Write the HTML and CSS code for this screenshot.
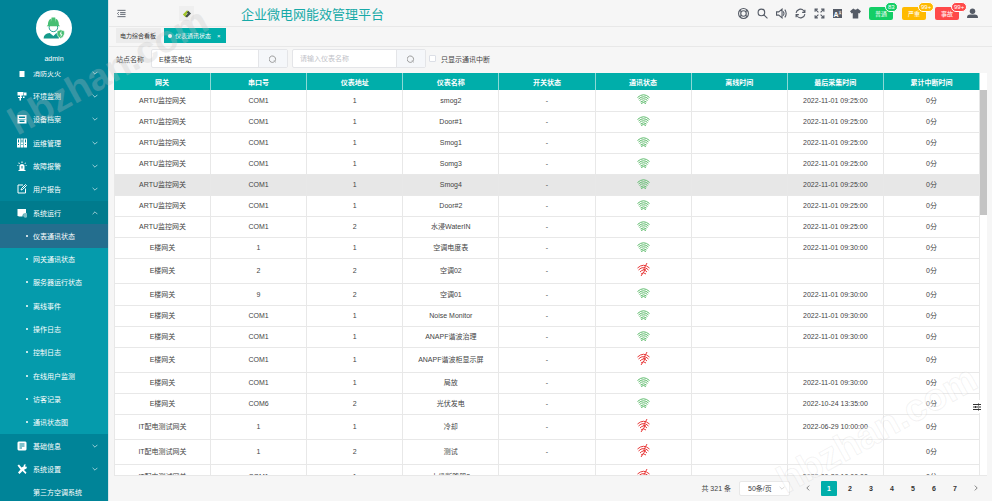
FILE: index.html
```html
<!DOCTYPE html>
<html lang="zh-CN">

<head>
    <meta charset="UTF-8">
    <title>企业微电网能效管理平台</title>
    <link rel="stylesheet" href="styles.css">
</head>

<body>

    <!-- Shared icons -->
    <svg class="sprite" aria-hidden="true">
        <symbol id="wifi" viewBox="0 0 26 20">
            <path d="M1 7Q13-4 25 7M3 10Q13 1 23 10M5 13Q13 6 21 13M7 16Q13 11 19 16M8 19Q13 15 18 19" />
        </symbol>
        <symbol id="wifi-off" viewBox="0 0 26 26">
            <path d="M1 10Q13-1 25 10M3 14Q13 4 23 14M6 18Q13 10 20 18M8 22Q13 17 18 22" />
            <path d="M20 0L13 13h4L8 26" />
        </symbol>
        <symbol id="down" viewBox="0 0 10 10">
            <path d="M1 3l4 4 4-4" />
        </symbol>
        <symbol id="up" viewBox="0 0 10 10">
            <path d="M1 7l4-4 4 4" />
        </symbol>
        <symbol id="search" viewBox="0 0 20 20">
            <path d="M13 17a8 8 0 1 1 2-2M12 14l5 4" />
        </symbol>
    </svg>

    <!-- Sidebar -->
    <aside class="sidebar">
        <div class="profile">
            <div class="avatar">
                <svg viewBox="0 0 36 36">
                    <circle cx="17" cy="17" r="7" fill="#fff" stroke="#159a8a" stroke-width="1.500" />
                    <path fill="#46bf73" d="M8 13q0-8 5-10v6l1-8h6l1 8V3q5 2 5 10l2 2H6z" />
                    <path fill="#159a8a" d="M1 35q0-8 10-9l6 5 5-5 4 1v8z" />
                    <path fill="#46bf73" stroke="#fff" d="M29 21l6 2v5q-1 5-6 7-5-2-6-7v-5z" />
                    <path fill="none" stroke="#fff" stroke-width="1.500" d="M30 24l-2 4h3l-2 4" />
                </svg>
            </div>
            <span>admin</span>
        </div>
        <nav class="menu-wrap">
            <ul class="menu">
                <li><a href="#"><svg class="icon" viewBox="0 0 20 20"><path d="M5 5h10v13H5zM7 1h6v3H7z" /></svg>消防灭火<svg class="arrow"><use href="#down" /></svg></a></li>
                <li><a href="#"><svg class="icon" viewBox="0 0 20 20"><path d="M1 2h12v7H1zM14 3h5v6h-5zM6 9h3v4H6zM2 12h8v2H2zM5 14h3v5H5zM12 11h3v3h-3z" /></svg>环境监测<svg class="arrow"><use href="#down" /></svg></a></li>
                <li><a href="#"><svg class="icon" viewBox="0 0 20 20"><path fill-rule="evenodd" d="M1 2h18v17H1zM4 5v3h12V5zM3 10v1h14v-1zM5 13v3h10v-3z" /></svg>设备档案<svg class="arrow"><use href="#down" /></svg></a></li>
                <li><a href="#"><svg class="icon" viewBox="0 0 20 20"><path fill-rule="evenodd" d="M0 1h6v18H0zM7 1h6v18H7zM14 1h6v18h-6zM2 3v6h2V3zM9 3v6h2V3zM16 3v6h2V3zM2 12v2h2v-2zM9 12v2h2v-2zM16 12v2h2v-2z" /></svg>运维管理<svg class="arrow"><use href="#down" /></svg></a></li>
                <li><a href="#"><svg class="icon" viewBox="0 0 20 20"><path fill-rule="evenodd" d="M5 18V9q1-3 5-3t5 3v9h2v2H3v-2zM9 10v5h2v-5zM9 1h2v3H9zM2 4l2-1 2 2-1 1zM15 5l2-2 1 1-2 2zM0 9h3v1H0zM17 9h3v1h-3z" /></svg>故障报警<svg class="arrow"><use href="#down" /></svg></a></li>
                <li><a href="#"><svg class="icon line" viewBox="0 0 20 20"><path d="M12 2H2v16h15V9M8 12l1-3 8-8 2 2-8 8z" /></svg>用户报告<svg class="arrow"><use href="#down" /></svg></a></li>
                <li class="open">
                    <a href="#"><svg class="icon" viewBox="0 0 20 20"><path d="M1 2h17v8a6 6 0 0 0-7 6H1zM3 17h8v1H3z" /><path opacity=".5" d="M15 10a5 5 0 1 1 0 9 5 5 0 0 1 0-9z" /></svg>系统运行<svg class="arrow"><use href="#up" /></svg></a>
                    <ul class="submenu">
                        <li class="active"><a href="#">仪表通讯状态</a></li>
                        <li><a href="#">网关通讯状态</a></li>
                        <li><a href="#">服务器运行状态</a></li>
                        <li><a href="#">离线事件</a></li>
                        <li><a href="#">操作日志</a></li>
                        <li><a href="#">控制日志</a></li>
                        <li><a href="#">在线用户监测</a></li>
                        <li><a href="#">访客记录</a></li>
                        <li><a href="#">通讯状态图</a></li>
                    </ul>
                </li>
                <li><a href="#"><svg class="icon" viewBox="0 0 20 20"><path fill-rule="evenodd" d="M3 1h14l2 2v14l-2 2H3l-2-2V3zM5 5v2h10V5zM5 9v2h10V9zM5 13v2h5v-2z" /></svg>基础信息<svg class="arrow"><use href="#down" /></svg></a></li>
                <li><a href="#"><svg class="icon" viewBox="0 0 20 20"><path d="M1 3l3-2 5 6 4-2 1-4 4 0-2 3 2 2 2-1-1 4-4 2-1 1 5 5-2 3-6-6-6 6-3-3 5-6z" /></svg>系统设置<svg class="arrow"><use href="#down" /></svg></a></li>
                <li><a href="#"><span class="icon"></span>第三方空调系统</a></li>
            </ul>
        </nav>
    </aside>

    <div class="main">
        <!-- Top bar -->
        <header class="topbar">
            <button class="icon-btn fold" aria-label="折叠菜单"><svg class="line" viewBox="0 0 20 20"><path d="M1 3h18M7 8h12M7 12h12M1 17h18M4 7l-3 3 3 3" /></svg></button>
            <div class="logo">
                <svg viewBox="0 0 20 20"><path fill="#a3c52d" d="M0 11L10 1l5 3-7 7 3 3-4 4z" /><path fill="#45504c" d="M20 9L10 19l-5-3 7-7-3-3 4-4z" /><path fill="#a3c52d" d="M0 11L10 1l2 2-8 8 4 4-2 2z" /></svg>
            </div>
            <h1>企业微电网能效管理平台</h1>
            <div class="tools">
                <button class="icon-btn" aria-label="帮助"><svg class="line" viewBox="0 0 20 20"><circle cx="10" cy="10" r="9" /><circle cx="10" cy="10" r="5" /><path d="M4 4l2 3M16 4l-2 3M4 16l2-3M16 16l-2-3" /></svg></button>
                <button class="icon-btn" aria-label="搜索"><svg class="line" viewBox="0 0 20 20"><circle cx="8" cy="8" r="6" /><path d="M12 12l7 7" /></svg></button>
                <button class="icon-btn" aria-label="声音"><svg class="line" viewBox="0 0 20 20"><path d="M1 7h4l6-5v16l-6-5H1zM13 6q3 4 0 8M16 3q5 7 0 14" /></svg></button>
                <button class="icon-btn" aria-label="刷新"><svg class="line" viewBox="0 0 20 20"><path d="M2 9a8 8 0 0 1 14-4l2 3M18 3v5h-5M18 11a8 8 0 0 1-14 4l-2-3M2 17v-5h5" /></svg></button>
                <button class="icon-btn" aria-label="全屏"><svg class="line" viewBox="0 0 20 20"><path d="M8 8L3 3M2 7V2h5M12 8l5-5M13 2h5v5M8 12l-5 5M2 13v5h5M12 12l5 5M18 13v5h-5" /></svg></button>
                <button class="icon-btn lang" aria-label="语言"><span>A<sup>文</sup></span></button>
                <button class="icon-btn" aria-label="主题"><svg viewBox="0 0 20 20"><path d="M6 1q4 4 8 0l6 5-3 4-2-1v10H5V9l-2 1-3-4z" /></svg></button>
                <button class="alarm normal">普通<i>83</i></button>
                <button class="alarm serious">严重<i>99+</i></button>
                <button class="alarm accident">事故<i>99+</i></button>
                <button class="icon-btn" aria-label="用户"><svg viewBox="0 0 20 20"><circle cx="10" cy="6" r="5" /><path d="M0 18q0-6 6-6h8q6 0 6 6z" /></svg></button>
            </div>
        </header>

        <!-- Tabs -->
        <div class="tabs">
            <a href="#" class="tab">电力综合看板</a>
            <a href="#" class="tab current">仪表通讯状态<span class="close">×</span></a>
        </div>

        <!-- Filters -->
        <form class="filters">
            <label for="station">站点名称</label>
            <div class="search-box">
                <input type="text" id="station" value="E楼变电站">
                <button type="button" aria-label="搜索站点"><svg><use href="#search" /></svg></button>
            </div>
            <div class="search-box">
                <input type="text" placeholder="请输入仪表名称" aria-label="仪表名称">
                <button type="button" aria-label="搜索仪表"><svg><use href="#search" /></svg></button>
            </div>
            <input type="checkbox" id="onlyBroken">
            <label for="onlyBroken">只显示通讯中断</label>
        </form>

        <!-- Table -->
        <div class="table-box">
            <div class="table-scroll">
                <table>
                    <thead>
                        <tr><th>网关</th><th>串口号</th><th>仪表地址</th><th>仪表名称</th><th>开关状态</th><th>通讯状态</th><th>离线时间</th><th>最后采集时间</th><th>累计中断时间</th></tr>
                    </thead>
                    <tbody>
                        <tr><td>ARTU监控网关</td><td>COM1</td><td>1</td><td>smog2</td><td>-</td><td><svg class="on"><use href="#wifi" /></svg></td><td></td><td>2022-11-01 09:25:00</td><td>0分</td></tr>
                        <tr><td>ARTU监控网关</td><td>COM1</td><td>1</td><td>Door#1</td><td>-</td><td><svg class="on"><use href="#wifi" /></svg></td><td></td><td>2022-11-01 09:25:00</td><td>0分</td></tr>
                        <tr><td>ARTU监控网关</td><td>COM1</td><td>1</td><td>Smog1</td><td>-</td><td><svg class="on"><use href="#wifi" /></svg></td><td></td><td>2022-11-01 09:25:00</td><td>0分</td></tr>
                        <tr><td>ARTU监控网关</td><td>COM1</td><td>1</td><td>Somg3</td><td>-</td><td><svg class="on"><use href="#wifi" /></svg></td><td></td><td>2022-11-01 09:25:00</td><td>0分</td></tr>
                        <tr class="hover"><td>ARTU监控网关</td><td>COM1</td><td>1</td><td>Smog4</td><td>-</td><td><svg class="on"><use href="#wifi" /></svg></td><td></td><td>2022-11-01 09:25:00</td><td>0分</td></tr>
                        <tr><td>ARTU监控网关</td><td>COM1</td><td>1</td><td>Door#2</td><td>-</td><td><svg class="on"><use href="#wifi" /></svg></td><td></td><td>2022-11-01 09:25:00</td><td>0分</td></tr>
                        <tr><td>ARTU监控网关</td><td>COM1</td><td>2</td><td>水浸WaterIN</td><td>-</td><td><svg class="on"><use href="#wifi" /></svg></td><td></td><td>2022-11-01 09:25:00</td><td>0分</td></tr>
                        <tr><td>E楼网关</td><td>1</td><td>1</td><td>空调电度表</td><td>-</td><td><svg class="on"><use href="#wifi" /></svg></td><td></td><td>2022-11-01 09:30:00</td><td>0分</td></tr>
                        <tr><td>E楼网关</td><td>2</td><td>2</td><td>空调02</td><td>-</td><td><svg class="off"><use href="#wifi-off" /></svg></td><td></td><td></td><td>0分</td></tr>
                        <tr><td>E楼网关</td><td>9</td><td>2</td><td>空调01</td><td>-</td><td><svg class="on"><use href="#wifi" /></svg></td><td></td><td>2022-11-01 09:30:00</td><td>0分</td></tr>
                        <tr><td>E楼网关</td><td>COM1</td><td>1</td><td>Noise Monitor</td><td>-</td><td><svg class="on"><use href="#wifi" /></svg></td><td></td><td>2022-11-01 09:30:00</td><td>0分</td></tr>
                        <tr><td>E楼网关</td><td>COM1</td><td>1</td><td>ANAPF谐波治理</td><td>-</td><td><svg class="on"><use href="#wifi" /></svg></td><td></td><td>2022-11-01 09:30:00</td><td>0分</td></tr>
                        <tr><td>E楼网关</td><td>COM1</td><td>1</td><td>ANAPF谐波柜显示屏</td><td>-</td><td><svg class="off"><use href="#wifi-off" /></svg></td><td></td><td></td><td>0分</td></tr>
                        <tr><td>E楼网关</td><td>COM1</td><td>1</td><td>局放</td><td>-</td><td><svg class="on"><use href="#wifi" /></svg></td><td></td><td>2022-11-01 09:30:00</td><td>0分</td></tr>
                        <tr><td>E楼网关</td><td>COM6</td><td>2</td><td>光伏发电</td><td>-</td><td><svg class="on"><use href="#wifi" /></svg></td><td></td><td>2022-10-24 13:35:00</td><td>0分</td></tr>
                        <tr><td>IT配电测试网关</td><td>1</td><td>1</td><td>冷却</td><td>-</td><td><svg class="off"><use href="#wifi-off" /></svg></td><td></td><td>2022-06-29 10:00:00</td><td>0分</td></tr>
                        <tr><td>IT配电测试网关</td><td>1</td><td>2</td><td>测试</td><td>-</td><td><svg class="off"><use href="#wifi-off" /></svg></td><td></td><td></td><td>0分</td></tr>
                        <tr><td>IT配电测试网关</td><td>COM1</td><td>1</td><td>上级断路器2</td><td>-</td><td><svg class="off"><use href="#wifi-off" /></svg></td><td></td><td>2022-06-29 10:00:00</td><td>0分</td></tr>
                    </tbody>
                </table>
            </div>
            <div class="scrollbar">
                <div class="thumb"></div>
            </div>
        </div>

        <!-- Pagination -->
        <footer class="pagination">
            <span>共 321 条</span>
            <div class="page-size">
                <select aria-label="每页条数">
                    <option>50条/页</option>
                    <option>100条/页</option>
                </select>
                <svg class="arrow"><use href="#down" /></svg>
            </div>
            <div class="pages">
                <button aria-label="上一页"><svg viewBox="0 0 10 10"><path d="M7 1L3 5l4 4" /></svg></button>
                <button class="current">1</button>
                <button>2</button>
                <button>3</button>
                <button>4</button>
                <button>5</button>
                <button>6</button>
                <button>7</button>
                <button aria-label="下一页"><svg viewBox="0 0 10 10"><path d="M3 1l4 4-4 4" /></svg></button>
            </div>
        </footer>
    </div>

    <button class="settings" aria-label="列设置"><svg viewBox="0 0 16 16"><path d="M0 3h16M0 8h16M0 13h16M11 1v4M5 6v4M11 11v4" /></svg></button>

    <div class="watermark wm-top">hbzhan.com</div>
    <div class="watermark wm-bottom">hbzhan.com</div>

</body>

</html>
```

FILE: styles.css
```css
/* Base Reset */
* {
    box-sizing: border-box;
    margin: 0;
    padding: 0;
}

body {
    position: relative;
    display: flex;
    height: 100vh;
    overflow: hidden;
    background-color: #f6f6f6;
    color: #444;
    font-family: "Liberation Sans", "Noto Sans CJK SC", sans-serif;
    font-size: 7px;
}

button,
input,
select {
    font: inherit;
    color: inherit;
    border: none;
    background: none;
}

button {
    cursor: pointer;
}

a {
    color: inherit;
    text-decoration: none;
}

ul {
    list-style: none;
}

svg {
    display: block;
}

.sprite {
    position: absolute;
    width: 0;
    height: 0;
}

.line {
    fill: none;
    stroke: currentColor;
    stroke-width: 2;
}

.arrow {
    width: 6px;
    height: 6px;
    fill: none;
    stroke: currentColor;
    stroke-width: 1;
}

/* Sidebar */
.sidebar {
    flex: 0 0 108px;
    display: flex;
    flex-direction: column;
    background-color: #008498;
    color: #fff;
}

.profile {
    display: flex;
    flex-direction: column;
    align-items: center;
    gap: 9px;
    padding-top: 10px;
    height: 71px;
}

.avatar {
    width: 36px;
    height: 36px;
    padding: 7px;
    border-radius: 50%;
    background-color: #fff;
}

.menu-wrap {
    flex: 1;
    overflow: hidden;
}

/* The list is scrolled down a little, so its ends are cut off */
.menu {
    display: flex;
    flex-direction: column;
    height: calc(100% + 13px);
    margin-top: -10px;
}

.menu li {
    flex: 1 0 23px;
    display: flex;
    flex-direction: column;
}

.menu a {
    flex: 1;
    display: flex;
    align-items: center;
    padding: 0 10px 0 17px;
}

.menu .icon {
    width: 10px;
    height: 10px;
    margin-right: 6px;
    fill: #fff;
}

.menu .icon.line {
    fill: none;
}

.menu .arrow {
    margin-left: auto;
}

.menu .open {
    flex: 10 0 230px;
}

.open > a {
    background-color: #007b8d;
}

.submenu {
    flex: 9;
    display: flex;
    flex-direction: column;
    background-color: #059bac;
}

.submenu a {
    padding-left: 26px;
}

.submenu a::before {
    content: "";
    width: 2px;
    height: 2px;
    margin-right: 5px;
    border-radius: 50%;
    background-color: #fff;
}

.submenu .active {
    background-color: #246e8e;
}

/* Top bar */
.main {
    flex: 1;
    display: flex;
    flex-direction: column;
    min-width: 0;
    border-left: 1px solid #d9e6e8;
}

.topbar {
    display: flex;
    align-items: center;
    height: 27px;
    padding: 0 14px 0 8px;
    border-bottom: 1px solid #e8e8e8;
}

.icon-btn {
    width: 11px;
    height: 11px;
    color: #555b66;
    fill: currentColor;
}

.icon-btn svg {
    width: 100%;
    height: 100%;
}

.icon-btn .line {
    fill: none;
}

.fold {
    width: 9px;
    height: 9px;
}

.logo {
    width: 15px;
    height: 15px;
    margin-left: 53px;
    padding: 4px;
    background-color: #efefef;
}

.logo svg {
    width: 8px;
    height: 8px;
}

.topbar h1 {
    margin-left: 47px;
    color: #18aaa8;
    font-size: 13px;
    font-weight: normal;
}

.tools {
    display: flex;
    align-items: center;
    gap: 8px;
    margin-left: auto;
}

.tools .lang {
    width: 9px;
    height: 9px;
    background-color: #555b66;
    color: #fff;
    font-size: 7px;
    font-weight: bold;
    line-height: 9px;
}

.lang sup {
    font-size: 3px;
}

.alarm {
    position: relative;
    width: 24px;
    height: 13px;
    border-radius: 2px;
    color: #fff;
    font-size: 6px;
}

.alarm + .alarm {
    margin-left: 1px;
}

.alarm i {
    position: absolute;
    top: -5px;
    left: 16px;
    padding: 0 2px;
    border: 1px solid #fff;
    border-radius: 5px;
    background-color: inherit;
    font-size: 6px;
    font-style: normal;
    line-height: 8px;
}

.normal {
    background-color: #13ce66;
}

.serious {
    background-color: #ffba00;
}

.accident {
    background-color: #ff4949;
}

/* Tabs */
.tabs {
    display: flex;
    gap: 3px;
    height: 20px;
    padding: 1px 7px 3px;
    border-bottom: 1px solid #e8e8e8;
}

.tab {
    display: flex;
    align-items: center;
    padding: 0 5px 0 4px;
    background-color: #ececec;
    font-size: 6px;
    color: #333;
}

.tab.current {
    background-color: #00aeaa;
    color: #fff;
}

.tab.current::before {
    content: "";
    width: 4px;
    height: 4px;
    margin-right: 3px;
    border-radius: 50%;
    background-color: #fff;
}

.close {
    margin-left: 6px;
}

/* Filters */
.filters {
    display: flex;
    align-items: center;
    padding: 2px 7px 4px;
}

.search-box {
    display: flex;
    width: 137px;
    height: 19px;
    margin-left: 7px;
    border: 1px solid #e4e5e8;
    border-radius: 2px;
    background-color: #fff;
}

.search-box + .search-box {
    margin-left: 4px;
    width: 134px;
}

.search-box input {
    flex: 1;
    min-width: 0;
    padding: 0 7px;
    outline: none;
}

.search-box input::placeholder {
    color: #bfc2c8;
}

.search-box button {
    width: 29px;
    padding: 0 10px;
    border-left: 1px solid #e4e5e8;
    background-color: #f5f7fa;
}

.search-box svg {
    width: 8px;
    height: 8px;
    fill: none;
    stroke: #888;
    stroke-width: 2;
}

.filters input[type="checkbox"] {
    appearance: none;
    width: 7px;
    height: 7px;
    margin: 0 5px 0 3px;
    border: 1px solid #dcdfe6;
    border-radius: 1px;
    background-color: #fff;
}

/* Table */
.table-box {
    flex: 1 1 0;
    display: flex;
    min-height: 0;
    margin: 1px 5px 0;
    border-bottom: 1px solid #e8e8e8;
    background-color: #fff;
}

.table-scroll {
    flex: 1;
    overflow: hidden;
}

table {
    width: 100%;
    table-layout: fixed;
    border-collapse: separate;
    border-spacing: 0;
    text-align: center;
}

th {
    height: 17px;
    border-right: 1px solid #8cd9d6;
    background-color: #00aeaa;
    color: #fff;
}

th:first-child {
    width: 97px;
}

td {
    height: 21px;
    border-right: 1px solid #e8e8e8;
    border-bottom: 1px solid #e8e8e8;
    line-height: 10px;
    white-space: nowrap;
}

tr:nth-child(9n + 1) td {
    height: 22px;
}

td:first-child {
    border-left: 1px solid #e8e8e8;
}

.hover td {
    background-color: #e7e7e7;
}

td svg {
    width: 13px;
    margin: 0 auto;
    fill: none;
    stroke-width: 2;
}

.on {
    height: 10px;
    margin-bottom: 3px;
    stroke: #5dbb6b;
}

.off {
    height: 13px;
    margin: 4px auto 7px;
    stroke: #e83a3a;
}

.scrollbar {
    width: 7px;
    padding-top: 17px;
}

.thumb {
    height: 125px;
    background-color: #c4c4c4;
}

/* Pagination */
.pagination {
    display: flex;
    align-items: center;
    justify-content: flex-end;
    height: 25px;
    padding: 0 8px 1px 0;
}

.page-size {
    display: flex;
    align-items: center;
    width: 51px;
    height: 15px;
    margin: 0 10px 0 8px;
    padding-right: 4px;
    border: 1px solid #e8e8e8;
    border-radius: 2px;
    background-color: #fff;
}

.page-size select {
    appearance: none;
    flex: 1;
    padding-left: 8px;
    outline: none;
}

.page-size .arrow {
    color: #bbb;
}

.pages {
    display: flex;
    gap: 5px;
}

.pages button {
    width: 16px;
    height: 15px;
    border-radius: 1px;
    color: #333;
    font-weight: bold;
}

.pages .current {
    background-color: #00aeaa;
    color: #fff;
}

.pages svg {
    width: 6px;
    height: 6px;
    margin: 0 auto;
    fill: none;
    stroke: currentColor;
    stroke-width: 1;
}

/* Floating column settings */
.settings {
    position: absolute;
    right: 10px;
    top: 400px;
    width: 10px;
    height: 13px;
    padding: 0 1px;
    background-color: #fff;
}

.settings svg {
    width: 8px;
    height: 8px;
    stroke: #333;
    stroke-width: 2;
}

/* Watermark */
.watermark {
    position: absolute;
    color: rgba(195, 195, 195, 0.28);
    font-size: 38px;
    font-weight: bold;
    line-height: 40px;
    transform: rotate(-29deg);
    pointer-events: none;
}

.wm-top {
    left: -3px;
    top: 51px;
}

.wm-bottom {
    right: 4px;
    bottom: 52px;
    color: rgba(255, 255, 255, 0.4);
    -webkit-text-stroke: 1px rgba(150, 150, 150, 0.12);
}
```
